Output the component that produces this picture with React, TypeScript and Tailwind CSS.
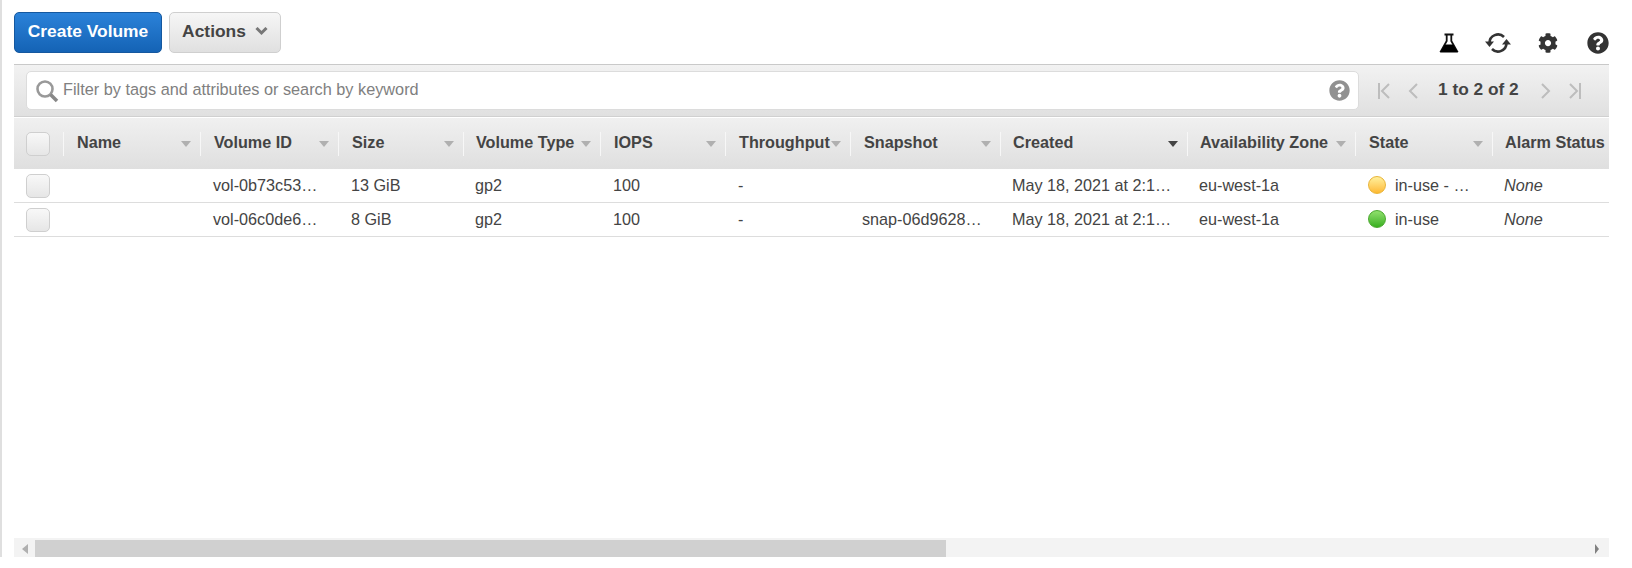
import React from "react";
import { FaCog, FaQuestionCircle } from "react-icons/fa";

const GRID = "grid grid-cols-[49px_137px_138px_125px_137px_125px_125px_150px_187px_168px_137px_117px]";

const columns = [
  { label: "Name", pad: "pl-[13px]" },
  { label: "Volume ID", pad: "pl-[13px]" },
  { label: "Size", pad: "pl-[13px]" },
  { label: "Volume Type", pad: "pl-[12px]" },
  { label: "IOPS", pad: "pl-[13px]" },
  { label: "Throughput", pad: "pl-[13px]" },
  { label: "Snapshot", pad: "pl-[13px]" },
  { label: "Created", pad: "pl-[12px]", dark: true },
  { label: "Availability Zone", pad: "pl-[12px]" },
  { label: "State", pad: "pl-[13px]" },
];

const rows = [
  { id: "vol-0b73c53…", size: "13 GiB", snap: "", state: "in-use - …", busy: true },
  { id: "vol-06c0de6…", size: "8 GiB", snap: "snap-06d9628…", state: "in-use", busy: false },
];

function Check() {
  return (
    <div className="h-6 w-6 rounded-[5px] border border-[#cfcfcf] bg-gradient-to-b from-[#f8f8f8] to-[#e6e6e6]" />
  );
}

function Caret({ dark }: { dark?: boolean }) {
  return (
    <svg width="10" height="6" viewBox="0 0 10 6" className="shrink-0">
      <path d="M0 0h10L5 6z" fill={dark ? "#444444" : "#b0b0b0"} />
    </svg>
  );
}

function Flask() {
  return (
    <svg width="20" height="20" viewBox="0 0 20 20">
      <path d="M5.5 1.5h9M7.7 2v6L2 18h16L12.3 8V2" fill="none" stroke="#111" strokeWidth="1.8" />
      <path d="M5.8 11.5h8.4L19 19.5H1z" fill="#000" />
    </svg>
  );
}

function Refresh() {
  return (
    <svg width="26" height="22" viewBox="0 0 26 22">
      <path d="M4.5 11a8.5 8.5 0 0 1 14.5-6" fill="none" stroke="#333" strokeWidth="2.6" />
      <path d="M21.5 11a8.5 8.5 0 0 1-14.5 6" fill="none" stroke="#333" strokeWidth="2.6" />
      <path d="M0 9.5h9L4.5 15z" fill="#333" />
      <path d="M17 12.5h9L21.5 7z" fill="#333" />
    </svg>
  );
}

function Pager({ d }: { d: string }) {
  return (
    <svg width="14" height="18" viewBox="0 0 14 18">
      <path d={d} fill="none" stroke="#bdbdbd" strokeWidth="2" />
    </svg>
  );
}

function Dot({ busy }: { busy: boolean }) {
  return (
    <div
      className={`h-[18px] w-[18px] rounded-full border ${
        busy
          ? "border-[#e9b437] bg-gradient-to-b from-[#fff09a] to-[#fdb92c]"
          : "border-[#4aa82e] bg-gradient-to-b from-[#8fe06c] to-[#36b01c]"
      }`}
    />
  );
}

export default function App() {
  return (
    <div className="h-[568px] w-[1632px] overflow-hidden bg-white font-['Liberation_Sans',Arial,sans-serif] text-[16.2px] text-[#444444]">
      <div className="flex h-[557px] flex-col border-l-2 border-[#dfdfdf] pl-3 pr-[23px]">
        <div className="flex h-[64px] shrink-0 items-start pt-3">
          <button className="h-[41px] w-[148px] rounded-[5px] border border-[#15589f] bg-gradient-to-b from-[#2b82d9] to-[#1463b5] pb-[2px] text-[17.4px] font-bold text-white">
            Create Volume
          </button>
          <button className="ml-[7px] flex h-[41px] w-[112px] items-center justify-center gap-[9px] rounded-[5px] border border-[#cfcfcf] bg-gradient-to-b from-[#f6f6f6] to-[#e0e0e0] pb-[2px] text-[17.4px] font-bold">
            Actions
            <svg width="13" height="9" viewBox="0 0 13 9">
              <path d="M1.5 1l5 5 5-5" fill="none" stroke="#777" strokeWidth="3" />
            </svg>
          </button>
          <div className="ml-auto flex items-center pt-[20px]">
            <div className="mr-[26px]"><Flask /></div>
            <div className="mr-[27px]"><Refresh /></div>
            <FaCog className="mr-[29px] text-[20px] text-[#333333]" />
            <FaQuestionCircle className="mr-0 text-[22px] text-[#333333]" />
          </div>
        </div>

        <div className="flex h-[53px] shrink-0 items-center border-y border-t-[#c9c9c9] border-b-[#d0d0d0] bg-gradient-to-b from-[#f2f2f2] to-[#e0e0e0] pl-3">
          <div className="flex h-[39px] w-[1333px] items-center rounded-[5px] border border-[#dcdcdc] bg-white pr-2 pl-2">
            <svg width="24" height="24" viewBox="0 0 24 24" className="shrink-0">
              <circle cx="10" cy="10" r="7.5" fill="none" stroke="#999" strokeWidth="2.6" />
              <path d="M15.5 15.5L22 22" stroke="#888" strokeWidth="3.6" />
            </svg>
            <span className="ml-[4px] pb-[2px] text-[16.3px] text-[#808080]">Filter by tags and attributes or search by keyword</span>
            <FaQuestionCircle className="ml-auto text-[21px] text-[#919191]" />
          </div>
          <div className="ml-[18px] flex items-center">
            <Pager d="M2 1v16M12 2L5 9l7 7" />
            <div className="ml-[15px]"><Pager d="M11 2L4 9l7 7" /></div>
            <span className="ml-[18px] pb-[1px] text-[17.3px] font-bold text-[#444444]">1 to 2 of 2</span>
            <div className="ml-[20px]"><Pager d="M3 2l7 7-7 7" /></div>
            <div className="ml-[15px]"><Pager d="M2 2l7 7-7 7M12 1v16" /></div>
          </div>
        </div>

        <div className={`${GRID} mt-[1px] h-[51px] shrink-0 items-center bg-gradient-to-b from-[#f0f0f0] to-[#dfdfdf] font-bold`}>
          <div className="flex h-6 pl-3"><Check /></div>
          {columns.map((c) => (
            <div key={c.label} className={`flex h-6 items-center justify-between border-l border-[#f7f7f7] ${c.pad} pr-[9px]`}>
              <span className="pb-[2px] whitespace-nowrap">{c.label}</span>
              <Caret dark={c.dark} />
            </div>
          ))}
          <div className="flex h-6 items-center overflow-hidden border-l border-[#f7f7f7] pb-[2px] pl-[12px] whitespace-nowrap">
            Alarm Status
          </div>
        </div>

        {rows.map((r) => (
          <div key={r.id} className={`${GRID} h-[34px] shrink-0 items-center border-b border-[#dddddd]`}>
            <div className="pl-3"><Check /></div>
            <div />
            <div className="pl-[13px]">{r.id}</div>
            <div className="pl-[13px]">{r.size}</div>
            <div className="pl-[12px]">gp2</div>
            <div className="pl-[13px]">100</div>
            <div className="pl-[13px]">-</div>
            <div className="pl-[12px] whitespace-nowrap">{r.snap}</div>
            <div className="pl-[12px] whitespace-nowrap">May 18, 2021 at 2:1…</div>
            <div className="pl-[12px]">eu-west-1a</div>
            <div className="flex items-center pl-[13px]">
              <Dot busy={r.busy} />
              <span className="ml-[9px] whitespace-nowrap">{r.state}</span>
            </div>
            <div className="pl-[12px] italic">None</div>
          </div>
        ))}

        <div className="mt-auto flex h-[19px] shrink-0 items-end bg-[#f3f3f3] pr-[6px]">
          <div className="flex h-[17px] w-[21px] items-center justify-center">
            <svg width="6" height="10" viewBox="0 0 6 10"><path d="M6 0v10L0 5z" fill="#b0b0b0" /></svg>
          </div>
          <div className="h-[17px] w-[911px] bg-[#d0d0d0]" />
          <div className="ml-auto flex h-[17px] items-center pr-[2px]">
            <svg width="6" height="10" viewBox="0 0 6 10"><path d="M0 0v10l4-5z" fill="#808080" /></svg>
          </div>
        </div>
      </div>
    </div>
  );
}
